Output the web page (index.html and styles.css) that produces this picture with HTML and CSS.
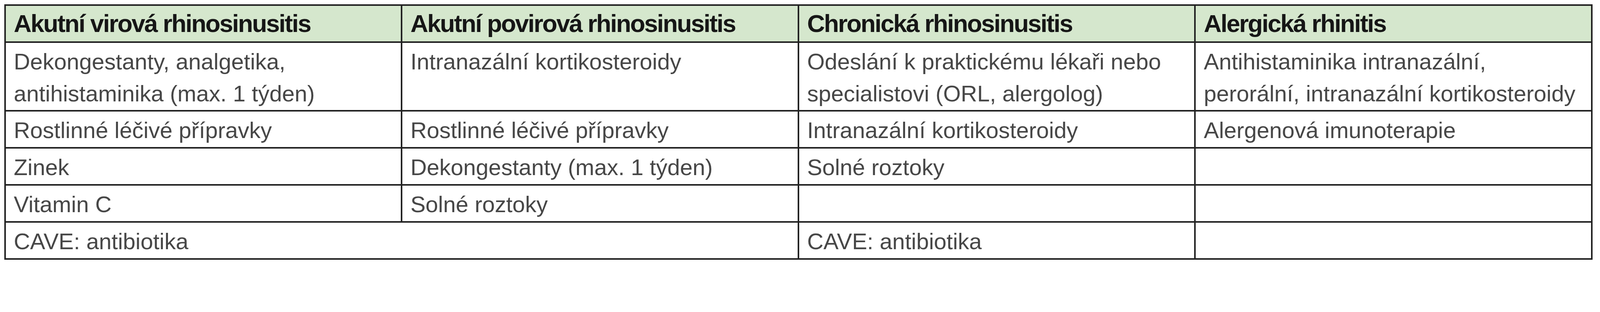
FILE: index.html
```html
<!DOCTYPE html>
<html lang="cs">
<head>
<meta charset="utf-8">
<title>Léčba rhinosinusitid</title>
<link rel="stylesheet" href="styles.css">
</head>
<body>
<table class="therapy">
  <colgroup>
    <col class="col"><col class="col"><col class="col"><col class="col">
  </colgroup>
  <thead>
    <tr>
      <th>Akutní virová rhinosinusitis</th>
      <th>Akutní povirová rhinosinusitis</th>
      <th>Chronická rhinosinusitis</th>
      <th>Alergická rhinitis</th>
    </tr>
  </thead>
  <tbody>
    <tr>
      <td>Dekongestanty, analgetika,<br>antihistaminika (max. 1 týden)</td>
      <td>Intranazální kortikosteroidy</td>
      <td>Odeslání k praktickému lékaři nebo<br>specialistovi (ORL, alergolog)</td>
      <td>Antihistaminika intranazální,<br>perorální, intranazální kortikosteroidy</td>
    </tr>
    <tr>
      <td>Rostlinné léčivé přípravky</td>
      <td>Rostlinné léčivé přípravky</td>
      <td>Intranazální kortikosteroidy</td>
      <td>Alergenová imunoterapie</td>
    </tr>
    <tr>
      <td>Zinek</td>
      <td>Dekongestanty (max. 1 týden)</td>
      <td>Solné roztoky</td>
      <td></td>
    </tr>
    <tr>
      <td>Vitamin C</td>
      <td>Solné roztoky</td>
      <td></td>
      <td></td>
    </tr>
    <tr>
      <td colspan="2">CAVE: antibiotika</td>
      <td>CAVE: antibiotika</td>
      <td></td>
    </tr>
  </tbody>
</table>
</body>
</html>
```

FILE: styles.css
```css
:root {
  /* one pixel of the 4800px-wide design */
  --u: calc(100vw / 4800);
}

html, body {
  margin: 0;
  padding: 0;
  background: #ffffff;
}

body {
  padding: calc(12.5 * var(--u)) 0 0 calc(12.5 * var(--u));
  font-family: "Liberation Sans", Arial, sans-serif;
}

.therapy {
  border-collapse: collapse;
  table-layout: fixed;
  width: calc(4765 * var(--u));
}

.therapy .col {
  width: 25%;
}

.therapy th,
.therapy td {
  border: calc(5 * var(--u)) solid #222222;
  text-align: left;
  vertical-align: top;
  line-height: calc(95.5 * var(--u));
  white-space: nowrap;
}

.therapy th {
  background: #d5e7cd;
  color: #161616;
  font-weight: bold;
  font-size: calc(74 * var(--u));
  letter-spacing: calc(-3 * var(--u));
  padding: calc(6.6 * var(--u)) calc(24 * var(--u)) calc(4.9 * var(--u)) calc(24 * var(--u));
}

.therapy td {
  color: #474747;
  font-weight: normal;
  font-size: calc(68 * var(--u));
  padding: calc(8.4 * var(--u)) calc(24 * var(--u)) calc(2.6 * var(--u)) calc(24 * var(--u));
}
```
